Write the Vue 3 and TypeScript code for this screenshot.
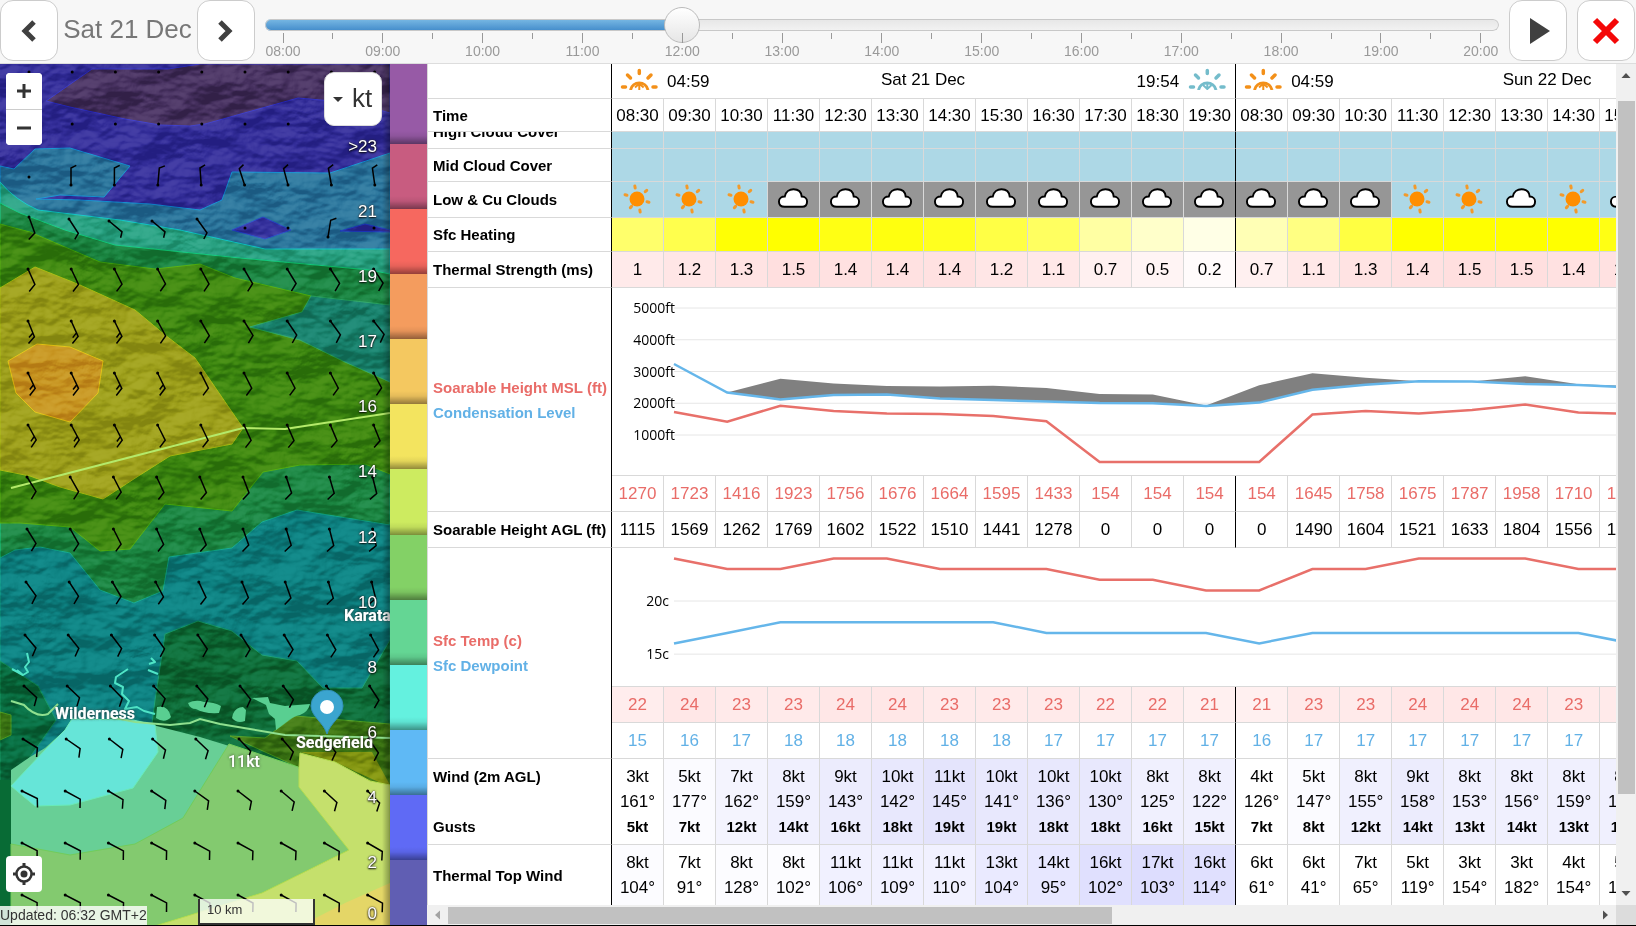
<script setup lang="ts">
import { computed, ref } from 'vue'

interface Hour {
  time: string
  cloud: 'sun' | 'cloud' | 'overcast'
  heat: string
  thermal: string
  msl: number
  agl: number
  temp: number
  dew: number
  wind: [number, number, number]
  top: [number, number]
  dayEnd?: boolean
}

const hour = ref(12)
const unit = ref('kt')

const h = (
  time: string, cloud: Hour['cloud'], heat: string, thermal: string, msl: number, agl: number,
  temp: number, dew: number, wind: [number, number, number], top: [number, number], dayEnd = false,
): Hour => ({ time, cloud, heat, thermal, msl, agl, temp, dew, wind, top, dayEnd })

const hours: Hour[] = [
  h('08:30', 'sun', '#ffff6b', '1', 1270, 1115, 22, 15, [3, 161, 5], [8, 104]),
  h('09:30', 'sun', '#ffff4d', '1.2', 1723, 1569, 24, 16, [5, 177, 7], [7, 91]),
  h('10:30', 'sun', '#ffff05', '1.3', 1416, 1262, 23, 17, [7, 162, 12], [8, 128]),
  h('11:30', 'overcast', '#ffff00', '1.5', 1923, 1769, 23, 18, [8, 159, 14], [8, 102]),
  h('12:30', 'overcast', '#ffff14', '1.4', 1756, 1602, 24, 18, [9, 143, 16], [11, 106]),
  h('13:30', 'overcast', '#ffff0f', '1.4', 1676, 1522, 24, 18, [10, 142, 18], [11, 109]),
  h('14:30', 'overcast', '#ffff1f', '1.4', 1664, 1510, 23, 18, [11, 145, 19], [11, 110]),
  h('15:30', 'overcast', '#ffff45', '1.2', 1595, 1441, 23, 18, [10, 141, 19], [13, 104]),
  h('16:30', 'overcast', '#ffff60', '1.1', 1433, 1278, 23, 17, [10, 136, 18], [14, 95]),
  h('17:30', 'overcast', '#ffffa3', '0.7', 154, 0, 22, 17, [10, 130, 18], [16, 102]),
  h('18:30', 'overcast', '#ffffca', '0.5', 154, 0, 22, 17, [8, 125, 16], [17, 103]),
  h('19:30', 'overcast', '#ffffe6', '0.2', 154, 0, 21, 17, [8, 122, 15], [16, 114], true),
  h('08:30', 'overcast', '#ffffb5', '0.7', 154, 0, 21, 16, [4, 126, 7], [6, 61]),
  h('09:30', 'overcast', '#ffff82', '1.1', 1645, 1490, 23, 17, [5, 147, 8], [6, 41]),
  h('10:30', 'overcast', '#ffff42', '1.3', 1758, 1604, 23, 17, [8, 155, 12], [7, 65]),
  h('11:30', 'sun', '#ffff00', '1.4', 1675, 1521, 24, 17, [9, 158, 14], [5, 119]),
  h('12:30', 'sun', '#ffff00', '1.5', 1787, 1633, 24, 17, [8, 153, 13], [3, 154]),
  h('13:30', 'cloud', '#ffff00', '1.5', 1958, 1804, 24, 17, [8, 156, 14], [3, 182]),
  h('14:30', 'sun', '#ffff00', '1.4', 1710, 1556, 23, 17, [8, 159, 13], [4, 154]),
  h('15:30', 'cloud', '#ffff14', '1.4', 1667, 1513, 23, 16, [8, 160, 13], [5, 150]),
]

const dayHours = 12
const days = [
  { name: 'Sat 21 Dec', rise: '04:59', set: '19:54' },
  { name: 'Sun 22 Dec', rise: '04:59', set: '19:54' },
]

const thermalBg = (v: string) => `rgba(255, 0, 0, ${(Number(v) / 1.5) * 0.125})`
const tempBg = (t: number) => `rgba(255, 0, 0, ${0.06 + (t - 21) * 0.011})`
const windBg = (s: number) => `rgba(0, 0, 230, ${Math.max(0, (s - 4) * 0.015)})`
const topBg = (s: number) => `rgba(0, 0, 250, ${Math.max(0, (s - 7) * 0.0135)})`

/* Chart geometry */
const px = (i: number) => 62 + i * 53.2
const heightY = (v: number) => 147 - (v - 1000) * 0.03175
const tempY = (v: number) => 53 - (v - 20) * 10.63
const line = (values: number[], y: (v: number) => number) =>
  values.map((v, i) => `${px(i).toFixed(1)},${y(v).toFixed(1)}`).join(' ')

const plotted = hours.slice(1)
const base = [3236, 2339, 2118, 2260, 2276, 2150, 2100, 2055, 2008, 2000, 1913, 2020, 2427, 2584, 2694, 2685, 2606, 2575, 2500]
const tops = [3236, 2339, 2773, 2620, 2543, 2530, 2550, 2480, 2291, 2276, 1930, 2565, 2943, 2806, 2694, 2685, 2850, 2600, 2540]
const mslLine = line(plotted.map((x) => x.msl), heightY)
const tempLine = line(plotted.map((x) => x.temp), tempY)
const dewLine = line(plotted.map((x) => x.dew), tempY)
const baseLine = line(base, heightY)
const cloudArea = `${line(tops, heightY)} ${baseLine.split(' ').reverse().join(' ')}`
const heightMarks = [5000, 4000, 3000, 2000, 1000]
const tempMarks = [20, 15]

/* Time slider */
const ticks = Array.from({ length: 25 }, (_, i) => ({
  major: i % 2 === 0,
  label: `${String(8 + i / 2).padStart(2, '0')}:00`,
}))
const fill = computed(() => `${((hour.value - 8) / 12) * 100}%`)

/* Wind speed scale */
const bands = [
  { color: '#975aa6', label: '>23' },
  { color: '#c85c80', label: '21' },
  { color: '#f6685f', label: '19' },
  { color: '#f49c5e', label: '17' },
  { color: '#f4c860', label: '16' },
  { color: '#f3e45f', label: '14' },
  { color: '#cdeb60', label: '12' },
  { color: '#83d166', label: '10' },
  { color: '#64d694', label: '8' },
  { color: '#64f1df', label: '6' },
  { color: '#5fb9f5', label: '4' },
  { color: '#5f6af5', label: '2' },
  { color: '#605eb3', label: '0' },
]

/* Wind barbs: heading in degrees, measured from straight down */
const dots: [number, number][] = [[29, 177], [245, 228], [288, 228], [374, 228]]
for (let i = 0; i < 9; i++) dots.push([29 + i * 43.2, 72], [29 + i * 43.2, 124])

const barb = (x: number, y: number, deg: number, tick = 10, double = false) => {
  const a = (deg * Math.PI) / 180
  const b = a - 1.1
  const ex = x + Math.sin(a) * 17
  const ey = y + Math.cos(a) * 17
  let d = `M${x.toFixed(1)} ${y.toFixed(1)}L${ex.toFixed(1)} ${ey.toFixed(1)}l${(Math.sin(b) * tick).toFixed(1)} ${(Math.cos(b) * tick).toFixed(1)}`
  if (double) {
    d += `M${(x + Math.sin(a) * 13).toFixed(1)} ${(y + Math.cos(a) * 13).toFixed(1)}l${(Math.sin(b) * 6).toFixed(1)} ${(Math.cos(b) * 6).toFixed(1)}`
  }
  return { d, x, y }
}
const barbs = [
  ...[180, 180, 175, 184, 198, 195, 190, 188].map((a, i) => barb(71 + i * 43.4, 185, a, 6)),
  barb(29, 217, 20, 9), barb(69, 219, 33, 7), barb(109, 221, 50, 6), barb(152, 221, 50, 6), barb(197, 219, 36, 7), barb(328, 237, 171, 6),
]
const rows: [number, number, number, number, number][] = [
  [28, 269, 24, 34, 0], [28, 321, 22, 38, 3], [28, 373, 25, 28, 4], [28, 425, 29, 22, 3], [27, 477, 32, 14, 0],
  [27, 529, 32, 12, 0], [26, 582, 36, 14, 0], [25, 635, 40, 28, 0], [24, 686, 48, 33, 0], [23, 739, 58, 35, 0],
  [22, 791, 64, 45, 0], [22, 843, 63, 60, 0], [22, 895, 63, 61, 0],
]
rows.forEach(([x, y, from, to, doubles]) => {
  for (let i = 0; i < 9; i++) barbs.push(barb(x + i * 43.2, y, from + ((to - from) * i) / 8, 9, i < doubles))
})

const sunRays = [[-2, -12, 80], [9, -8, -42], [11, 3, 15], [3, 12, 80], [-6, 8, -50], [-11, -4, 15]]
const cloudPath = 'M8 20C4 20 2 17.500 2 14.500C2 11 5 9.500 8 9.500C9 4.500 13 2 17 2C22 2 25 5 25.500 9.500C29 9.500 31 12 31 14.500C31 18 29 20 26 20Z'
</script>

<template>
  <div class="app">
    <header class="bar">
      <button class="btn" type="button" aria-label="Previous day">
        <svg width="16" height="22" viewBox="0 0 16 22"><path d="M13 2L4 11l9 9" fill="none" stroke="#404040" stroke-width="5" /></svg>
      </button>
      <span class="date">Sat 21 Dec</span>
      <button class="btn" type="button" aria-label="Next day">
        <svg width="16" height="22" viewBox="0 0 16 22"><path d="M2 2l9 9-9 9" fill="none" stroke="#404040" stroke-width="5" /></svg>
      </button>
      <div class="timeline">
        <input v-model.number="hour" class="range" type="range" min="8" max="20" step="0.5" aria-label="Forecast time" :style="{ '--fill': fill }">
        <div class="ticks">
          <span v-for="t in ticks" :key="t.label" class="tick" :class="{ major: t.major }"><i /><b v-if="t.major">{{ t.label }}</b></span>
        </div>
      </div>
      <button class="btn play" type="button" aria-label="Play">
        <svg width="22" height="28" viewBox="0 0 22 28"><path d="M1 1l20 13L1 27z" fill="#404040" /></svg>
      </button>
      <button class="btn" type="button" aria-label="Close">
        <svg width="28" height="28" viewBox="0 0 28 28"><path d="M3 3l22 22M25 3L3 25" stroke="#f40808" stroke-width="6" /></svg>
      </button>
    </header>

    <main class="main">
      <section class="map" aria-label="Wind map">
        <svg class="terrain" viewBox="0 64 390 861" preserveAspectRatio="xMinYMin slice">
          <defs>
            <filter id="relief" x="0" y="0" width="100%" height="100%" color-interpolation-filters="sRGB">
              <feTurbulence type="fractalNoise" baseFrequency="0.018 0.028" numOctaves="4" seed="8" />
              <feColorMatrix values="0 0 0 0 0  0 0 0 0 0  0 0 0 0 0  1 0 0 0 0" />
              <feDiffuseLighting surfaceScale="17" diffuseConstant="0.85" lighting-color="#fff"><feDistantLight azimuth="250" elevation="38" /></feDiffuseLighting>
              <feGaussianBlur stdDeviation="0.700" />
            </filter>
            <filter id="halo" x="-20%" y="-40%" width="140%" height="180%"><feDropShadow dx="0" dy="0" stdDeviation="1.500" flood-color="#333" flood-opacity="0.9" /></filter>
          </defs>
          <rect y="64" width="390" height="862" fill="#0e7d7c" />
          <g stroke-width="1">
            <path fill="#332d99" d="M0 64H390V260H0z" />
            <path fill="#46305f" stroke="#3434c4" d="M46 101L92 69H168L200 64H390V113L355 103L298 98L205 124L190 126L160 125L125 119L70 107z" />
            <path fill="#29739a" stroke="#1490d0" d="M0 166L14 169L35 149L70 148L130 166L104 197L60 195L36 199L80 200L150 204L200 210L222 200L232 172L330 173L390 153V252H0z" />
            <path fill="#34309c" stroke="#2848c8" d="M232 230L263 217L291 230L265 239zM340 231L365 224L390 230V232z" />
            <path fill="#27a080" stroke="#10c4c4" d="M0 182Q15 200 38 210L120 220L180 230L265 249H390V280H0z" />
            <path fill="#1a8440" stroke="#12c87c" d="M0 203L20 213L65 230L115 245L240 258L370 270L390 274V620H0z" />
            <path fill="#3b850f" stroke="#4aa80c" d="M0 224L30 232L100 262L155 269L200 264L235 278L311 296L302 312L250 327L300 340L345 362L390 382V474L365 464L300 465L263 472L232 511L165 504L130 549L100 551L70 527L20 523H0z" />
            <path fill="#17806b" stroke="#28a060" d="M250 327L302 312L311 296L390 305V382L345 362L300 340z" />
            <path fill="#9b9d19" stroke="#a5b80e" d="M0 288L35 267L80 285L135 310L165 335L195 358L243 428L232 444L170 456L140 475L103 499L60 487L30 476L0 470z" />
            <path fill="#c6931f" stroke="#e0c012" d="M8 361L37 344L70 347L103 361L98 393L70 422L35 412L16 393z" />
            <path fill="#0c7e7e" stroke="#10a488" d="M0 558L15 550L40 547L70 553L100 590L134 603L163 591L169 557L232 548L262 522L297 510L390 525V780H0z" />
            <path fill="#086b3e" stroke="#109058" d="M0 661L38 686L56 720L30 757L11 785V926H0z" />
            <path fill="#0d6a35" stroke="#14986a" d="M165 634L198 621L232 631L262 655L297 661L323 688H362L390 640V800L150 740L155 700z" />
            <path fill="#3c7513" stroke="#4c9b20" d="M230 736L265 738L295 716L390 724V800L298 767zM0 712L11 715V735L0 740z" />
            <path fill="#7f920f" d="M301 752H372L390 785H385L335 762z" />
          </g>
          <rect class="shade" y="64" width="390" height="862" filter="url(#relief)" />
          <rect x="0" y="780" width="11" height="146" fill="#086b35" />
          <g>
            <path fill="#68cf96" d="M11 770L30 757L45 748L65 730L72 719L133 720L200 737L298 767V925H11z" />
            <path fill="#66e5d8" stroke="#6aebb8" d="M11 786L45 750L65 730L72 719L133 720L155 725L158 752L133 788L70 805L35 806z" />
            <path fill="#83ca6f" stroke="#72cc5a" d="M11 844L70 855L135 844L183 818L229 744L298 767L349 850L262 893L155 926H11z" />
            <path fill="#c5e06c" stroke="#b6dd50" d="M299 767L300 753L335 762L370 781L390 785V926H155L262 893L349 850L299 787z" />
            <path fill="#e4d667" d="M390 883L345 903L300 926H390z" />
          </g>
          <g fill="#59cf91">
            <path d="M157 707Q168 704 171 717Q165 724 156 718zM188 703Q196 699 204 702Q214 702 221 706L219 713Q204 714 196 709Q190 709 188 703zM233 714Q236 707 243 707L246 710L245 721Q237 724 232 718zM252 698L268 697L270 703L285 706L310 704Q308 712 300 715Q294 716 288 721L276 730L275 719L269 714L266 705z" />
          </g>
          <g fill="none" stroke="#4fe4c6" stroke-width="2" stroke-linejoin="round">
            <path d="M27 653L29 662L25 667L28 672L23 675L17 670M23 675L12 669M128 669L116 677L115 683L123 687L122 694L129 701L125 709L137 707L144 711L155 714M151 658L155 662L149 664M148 670L158 674" />
          </g>
          <g fill="none" stroke="#8fe08f" stroke-width="2">
            <path d="M11 701L24 705Q36 718 48 714L58 704M110 717L135 722L170 725L190 723L200 719L220 724L250 729L285 735L390 738" />
            <path stroke="#b4ea6a" d="M11 488L243 428L285 429L390 413" />
          </g>
          <g class="barbs">
            <g v-for="(b, i) in barbs" :key="`b${i}`"><path :d="b.d" /><circle :cx="b.x" :cy="b.y" r="1.500" /></g>
            <circle v-for="(d, i) in dots" :key="`d${i}`" :cx="d[0]" :cy="d[1]" r="1.500" />
          </g>
          <g class="places" filter="url(#halo)">
            <text x="55" y="719">Wilderness</text>
            <text x="296" y="748">Sedgefield</text>
            <text x="344" y="621">Karata</text>
            <text class="speed" x="228" y="767">11kt</text>
          </g>
          <path fill="#3ba5cf" stroke="#3290b8" d="M327 734C324 723 311 716 311 706A16 16 0 0 1 343 706C343 716 330 723 327 734z" />
          <circle cx="327" cy="707" r="7" fill="#fff" />
        </svg>

        <div class="zoom">
          <button type="button" aria-label="Zoom in"><svg width="16" height="16" viewBox="0 0 16 16"><path d="M8 1v14M1 8h14" stroke="#333" stroke-width="3" /></svg></button>
          <button type="button" aria-label="Zoom out"><svg width="16" height="16" viewBox="0 0 16 16"><path d="M1 8h14" stroke="#333" stroke-width="3" /></svg></button>
        </div>
        <label class="unit">
          <svg width="10" height="5" viewBox="0 0 10 5"><path d="M0 0h10L5 5z" fill="#333" /></svg>
          <select v-model="unit" aria-label="Wind unit"><option>kt</option></select>
        </label>
        <button class="locate" type="button" aria-label="My location">
          <svg width="22" height="22" viewBox="0 0 22 22"><circle cx="11" cy="11" r="7.500" fill="none" stroke="#333" stroke-width="2.500" /><circle cx="11" cy="11" r="3.500" fill="#333" /><path d="M11 0v4M11 18v4M0 11h4M18 11h4" stroke="#333" stroke-width="3" /></svg>
        </button>
        <div class="updated">Updated: 06:32 GMT+2</div>
        <div class="scale">10 km</div>
      </section>

      <aside class="legend" aria-label="Wind scale">
        <div v-for="b in bands" :key="b.label" class="band" :style="{ backgroundColor: b.color }"><span>{{ b.label }}</span></div>
      </aside>

      <section class="forecast">
        <div class="view">
          <table>
            <colgroup><col class="c-label"><col v-for="n in 24" :key="n" class="c-hour"></colgroup>
            <thead>
              <tr class="r-day">
                <th class="label" />
                <th v-for="d in days" :key="d.name" class="end" :colspan="dayHours">
                  <div class="day">
                    <span class="rise">
                      <svg width="38" height="22" viewBox="0 0 38 22" fill="none" stroke="#f39019" stroke-width="3"><path d="M10.500 22A9 9 0 0 1 28 22" /><path stroke-linecap="round" stroke-width="3.500" d="M2.500 19h3M33 19h3M7.500 7l3 3M31 7l-3 3M19.300 2.500v3" /><path stroke-width="2" d="M19.300 22v-6M15 19.500l4.300-4 4.300 4" /></svg>
                      {{ d.rise }}
                    </span>
                    <span class="name">{{ d.name }}</span>
                    <span class="rise set">
                      {{ d.set }}
                      <svg width="38" height="22" viewBox="0 0 38 22" fill="none" stroke="#74bccb" stroke-width="3"><path d="M10.500 22A9 9 0 0 1 28 22" /><path stroke-linecap="round" stroke-width="3.500" d="M2.500 19h3M33 19h3M7.500 7l3 3M31 7l-3 3M19.300 2.500v3" /><path stroke-width="2" d="M19.300 14.500v6M15 17l4.300 4 4.300-4" /></svg>
                    </span>
                  </div>
                </th>
              </tr>
              <tr class="r-time">
                <th class="label" scope="row">Time</th>
                <th v-for="(x, i) in hours" :key="i" :class="{ end: x.dayEnd }">{{ x.time }}</th>
              </tr>
            </thead>
            <tbody>
              <tr class="r-high">
                <th class="label" scope="row"><div class="clip"><span>High Cloud Cover</span></div></th>
                <td v-for="(x, i) in hours" :key="i" class="sky" :class="{ end: x.dayEnd }" />
              </tr>
              <tr class="r-mid">
                <th class="label" scope="row">Mid Cloud Cover</th>
                <td v-for="(x, i) in hours" :key="i" class="sky" :class="{ end: x.dayEnd }" />
              </tr>
              <tr class="r-std">
                <th class="label" scope="row">Low &amp; Cu Clouds</th>
                <td v-for="(x, i) in hours" :key="i" class="sky icon" :class="{ end: x.dayEnd, grey: x.cloud === 'overcast' }">
                  <svg v-if="x.cloud === 'sun'" width="30" height="30" viewBox="-15 -15 30 30">
                    <circle r="7.500" fill="#ff8e00" />
                    <rect v-for="(r, k) in sunRays" :key="k" x="-2.500" y="-1.500" width="5" height="3" rx="1.500" fill="#f39a2a" :transform="`translate(${r[0]} ${r[1]}) rotate(${r[2]})`" />
                  </svg>
                  <svg v-else width="32" height="24" viewBox="0 0 33 24"><path :d="cloudPath" fill="#fff" stroke="#000" stroke-width="2" /></svg>
                </td>
              </tr>
              <tr class="r-heat">
                <th class="label" scope="row">Sfc Heating</th>
                <td v-for="(x, i) in hours" :key="i" :class="{ end: x.dayEnd }" :style="{ backgroundColor: x.heat }" />
              </tr>
              <tr class="r-std">
                <th class="label" scope="row">Thermal Strength (ms)</th>
                <td v-for="(x, i) in hours" :key="i" :class="{ end: x.dayEnd }" :style="{ backgroundColor: thermalBg(x.thermal) }">{{ x.thermal }}</td>
              </tr>
              <tr class="r-height">
                <th class="label" rowspan="2"><div class="red">Soarable Height MSL (ft)</div><div class="blue">Condensation Level</div></th>
                <td class="chart" colspan="24">
                  <svg width="1248" height="187">
                    <g v-for="m in heightMarks" :key="m"><path class="grid" :d="`M62 ${heightY(m)}H1248`" /><text x="63" :y="heightY(m) + 5">{{ m }}ft</text></g>
                    <polygon :points="cloudArea" fill="#808080" />
                    <polyline class="l-blue" :points="baseLine" />
                    <polyline class="l-red" :points="mslLine" />
                  </svg>
                </td>
              </tr>
              <tr class="r-std">
                <td v-for="(x, i) in hours" :key="i" class="red" :class="{ end: x.dayEnd }">{{ x.msl }}</td>
              </tr>
              <tr class="r-std">
                <th class="label" scope="row">Soarable Height AGL (ft)</th>
                <td v-for="(x, i) in hours" :key="i" :class="{ end: x.dayEnd }">{{ x.agl }}</td>
              </tr>
              <tr class="r-temp">
                <th class="label" rowspan="3"><div class="red">Sfc Temp (c)</div><div class="blue">Sfc Dewpoint</div></th>
                <td class="chart" colspan="24">
                  <svg width="1248" height="138">
                    <g v-for="m in tempMarks" :key="m"><path class="grid" :d="`M62 ${tempY(m)}H1248`" /><text x="57" :y="tempY(m) + 5">{{ m }}c</text></g>
                    <polyline class="l-blue" :points="dewLine" />
                    <polyline class="l-red" :points="tempLine" />
                  </svg>
                </td>
              </tr>
              <tr class="r-std">
                <td v-for="(x, i) in hours" :key="i" class="red" :class="{ end: x.dayEnd }" :style="{ backgroundColor: tempBg(x.temp) }">{{ x.temp }}</td>
              </tr>
              <tr class="r-std">
                <td v-for="(x, i) in hours" :key="i" class="blue" :class="{ end: x.dayEnd }">{{ x.dew }}</td>
              </tr>
              <tr class="r-wind">
                <th class="label" scope="row"><div>Wind (2m AGL)</div><div>&nbsp;</div><div>Gusts</div></th>
                <td v-for="(x, i) in hours" :key="i" :class="{ end: x.dayEnd }" :style="{ backgroundColor: windBg(x.wind[0]) }">
                  <div>{{ x.wind[0] }}kt</div><div>{{ x.wind[1] }}°</div><div class="gust">{{ x.wind[2] }}kt</div>
                </td>
              </tr>
              <tr class="r-top">
                <th class="label" scope="row">Thermal Top Wind</th>
                <td v-for="(x, i) in hours" :key="i" :class="{ end: x.dayEnd }" :style="{ backgroundColor: topBg(x.top[0]) }">
                  <div>{{ x.top[0] }}kt</div><div>{{ x.top[1] }}°</div>
                </td>
              </tr>
            </tbody>
          </table>
        </div>
        <div class="vbar">
          <svg width="20" height="20" viewBox="0 0 20 20"><path d="M5.500 14L10 9l4.500 5z" fill="#505050" /></svg>
          <div class="vtrack"><i /></div>
          <svg width="20" height="20" viewBox="0 0 20 20"><path d="M5.500 6L10 11l4.500-5z" fill="#505050" /></svg>
        </div>
        <div class="hbar">
          <svg width="20" height="20" viewBox="0 0 20 20"><path d="M13 5.500L8 10l5 4.500z" fill="#a3a3a3" /></svg>
          <div class="htrack"><i /></div>
          <svg width="20" height="20" viewBox="0 0 20 20"><path d="M7 5.500L12 10l-5 4.500z" fill="#505050" /></svg>
        </div>
        <div class="corner" />
      </section>
    </main>
  </div>
</template>

<style>
body {
  margin: 0;
}
</style>

<style scoped>
* {
  box-sizing: border-box;
}
.app {
  display: flex;
  flex-direction: column;
  height: 100vh;
  overflow: hidden;
  border-bottom: 1px solid #000;
  background: #fff;
  color: #000;
  font-family: "Liberation Sans", Arial, sans-serif;
  font-size: 17px;
}
svg {
  display: block;
}

/* Top bar */
.bar {
  flex: none;
  display: flex;
  align-items: flex-start;
  height: 64px;
  padding-right: 1px;
  border-bottom: 1px solid #ddd;
  background: #f7f7f7;
}
.btn {
  flex: none;
  display: flex;
  align-items: center;
  justify-content: center;
  width: 58px;
  height: 61px;
  padding: 0;
  border: 1px solid #ccc;
  border-radius: 13px;
  background: #fff;
}
.play {
  margin-right: 10px;
  padding-left: 4px;
}
.date {
  width: 139px;
  color: #777;
  font-size: 26px;
  line-height: 58px;
  text-align: center;
  white-space: nowrap;
}
.timeline {
  flex: 1;
  min-width: 0;
  margin: 6px 10px 0;
}
.range {
  display: block;
  width: 100%;
  height: 37px;
  margin: 0;
  appearance: none;
  background: transparent;
}
.range::-webkit-slider-runnable-track {
  height: 12px;
  border-radius: 6px;
  background:
    linear-gradient(#79b9e4, #428bca) 0 0 / var(--fill) 100% no-repeat,
    linear-gradient(#e6e6e6, #f3f3f3);
  box-shadow: 0 0 0 1px #c8c8c8 inset;
}
.range::-webkit-slider-thumb {
  width: 36px;
  height: 36px;
  margin-top: -12px;
  appearance: none;
  border: 1px solid #bbb;
  border-radius: 50%;
  background: linear-gradient(#fff, #e6e6e6);
}
.ticks {
  display: flex;
  justify-content: space-between;
  margin-top: -10px;
  padding: 0 18px;
}
.tick {
  display: flex;
  flex-direction: column;
  align-items: center;
  width: 0;
}
.tick i {
  flex: none;
  width: 1px;
  height: 6px;
  background: #999;
}
.tick.major i {
  height: 10px;
}
.tick b {
  color: #999;
  font-size: 14px;
  font-weight: 400;
  line-height: 16px;
}

/* Map */
.main {
  flex: 1;
  display: flex;
  min-height: 0;
}
.map {
  position: relative;
  flex: none;
  width: 390px;
  overflow: hidden;
}
.map::after {
  position: absolute;
  inset: 0 0 0 auto;
  width: 8px;
  background: linear-gradient(90deg, transparent, #0005);
  content: "";
}
.terrain {
  width: 100%;
  height: 100%;
}
.shade {
  mix-blend-mode: soft-light;
  opacity: 0.4;
}
.barbs {
  fill: none;
  stroke: #000;
  stroke-width: 1.500;
}
.barbs circle {
  fill: #000;
  stroke: none;
}
.places {
  fill: #fff;
  font-family: Roboto, sans-serif;
  font-size: 16px;
  font-weight: 700;
}
.speed {
  font-weight: 500;
}
.zoom {
  position: absolute;
  top: 9px;
  left: 6px;
  overflow: hidden;
  border-radius: 4px;
  background: #fff;
}
.zoom button,
.locate {
  display: flex;
  align-items: center;
  justify-content: center;
  width: 36px;
  height: 36px;
  padding: 0;
  border: 0;
  background: #fff;
}
.zoom button + button {
  border-top: 1px solid #ccc;
}
.locate {
  position: absolute;
  bottom: 33px;
  left: 6px;
  border-radius: 4px;
}
.unit {
  position: absolute;
  top: 8px;
  right: 8px;
  width: 58px;
  height: 54px;
  border: 1px solid #ddd;
  border-radius: 10px;
  background: #fff;
}
.unit svg {
  position: absolute;
  top: 24px;
  left: 8px;
}
.unit select {
  width: 100%;
  height: 100%;
  padding: 0 0 2px 27px;
  appearance: none;
  border: 0;
  background: transparent;
  color: #333;
  font: 26px "Liberation Sans", Arial, sans-serif;
}
.updated {
  position: absolute;
  bottom: 0;
  left: 0;
  background: #ffffffd0;
  color: #333;
  font-size: 14px;
  line-height: 19px;
}
.scale {
  position: absolute;
  bottom: 0;
  left: 198px;
  width: 117px;
  height: 26px;
  padding-left: 7px;
  border: solid #333;
  border-width: 0 2px 2px;
  background: #ffffffc0;
  color: #333;
  font-size: 13px;
  line-height: 22px;
}

/* Wind scale */
.legend {
  flex: none;
  display: flex;
  flex-direction: column;
  width: 37px;
}
.band {
  position: relative;
  flex: 65 1 0;
  background-image: linear-gradient(transparent calc(100% - 13px), #0001 calc(100% - 8px), #0006);
}
.band:first-child {
  flex-grow: 80;
}
.band:last-child {
  background-image: none;
}
.band span {
  position: absolute;
  right: 50px;
  bottom: -13px;
  z-index: 1;
  color: #fff;
  font-size: 17px;
  line-height: 20px;
  text-shadow: 0 1px 2px #000, 0 0 2px #333;
}
.band:last-child span {
  bottom: 1px;
}

/* Forecast table */
.forecast {
  flex: 1;
  display: grid;
  grid-template: minmax(0, 1fr) 20px / minmax(0, 1fr) 20px;
  min-width: 0;
}
.view {
  overflow: hidden;
}
table {
  width: 1433px;
  table-layout: fixed;
  border-spacing: 0;
}
.c-label {
  width: 185px;
}
.c-hour {
  width: 52px;
}
th,
td {
  padding: 0;
  border: solid #d9d9d9;
  border-width: 0 1px 1px 0;
  font-weight: 400;
  line-height: 25px;
  text-align: center;
  white-space: nowrap;
}
.label {
  padding-left: 5px;
  border-left-width: 1px;
  border-right-color: #000;
  font-size: 15px;
  font-weight: 700;
  text-align: left;
}
.end {
  border-right-color: #000;
}
.r-day {
  height: 35px;
}
.r-time,
.r-mid {
  height: 33px;
}
.r-high {
  height: 17px;
}
.r-heat {
  height: 34px;
}
.r-std {
  height: 36px;
}
.r-height {
  height: 188px;
}
.r-temp {
  height: 139px;
}
.r-wind {
  height: 86px;
}
.r-top {
  height: 61px;
}
.clip {
  display: flex;
  align-items: flex-end;
  height: 16px;
  overflow: hidden;
  line-height: 32px;
}
.day {
  display: grid;
  grid-template-columns: 1fr auto 1fr;
  padding: 0 9px 0 8px;
}
.rise {
  display: flex;
  align-items: flex-start;
  gap: 9px;
  padding-top: 1px;
  line-height: 30px;
}
.rise svg {
  margin-top: 1px;
}
.set {
  justify-content: flex-end;
}
.name {
  line-height: 28px;
}
.sky {
  background: #add8e6;
}
.grey {
  background: #969696;
}
.icon {
  padding: 0 2px 2px 0;
}
.icon svg {
  margin: 0 auto;
}
.red {
  color: #e96c68;
}
.blue {
  color: #62b1e6;
}
.gust {
  font-size: 15px;
  font-weight: 700;
}
.chart text {
  font-family: "Open Sans", "Noto Sans", sans-serif;
  font-size: 14px;
  text-anchor: end;
}
.grid {
  stroke: #e6e6e6;
}
.l-blue,
.l-red {
  fill: none;
  stroke: #65b6ea;
  stroke-width: 2.500;
}
.l-red {
  stroke: #e8706a;
}

/* Scroll bars */
.vbar,
.hbar {
  display: flex;
  background: #f0f0f0;
}
.vbar {
  flex-direction: column;
}
.vtrack,
.htrack {
  flex: 1;
  display: grid;
}
.vtrack {
  grid-template-rows: 17fr 693fr 91fr;
  padding: 0 1px 0 2px;
}
.vtrack i {
  grid-row: 2;
  background: #c1c1c1;
}
.htrack {
  grid-template-columns: 1fr 663fr 484fr;
  padding: 2px 0 1px;
}
.htrack i {
  grid-column: 2;
  background: #c1c1c1;
}
.corner {
  background: #dcdcdc;
}
</style>
